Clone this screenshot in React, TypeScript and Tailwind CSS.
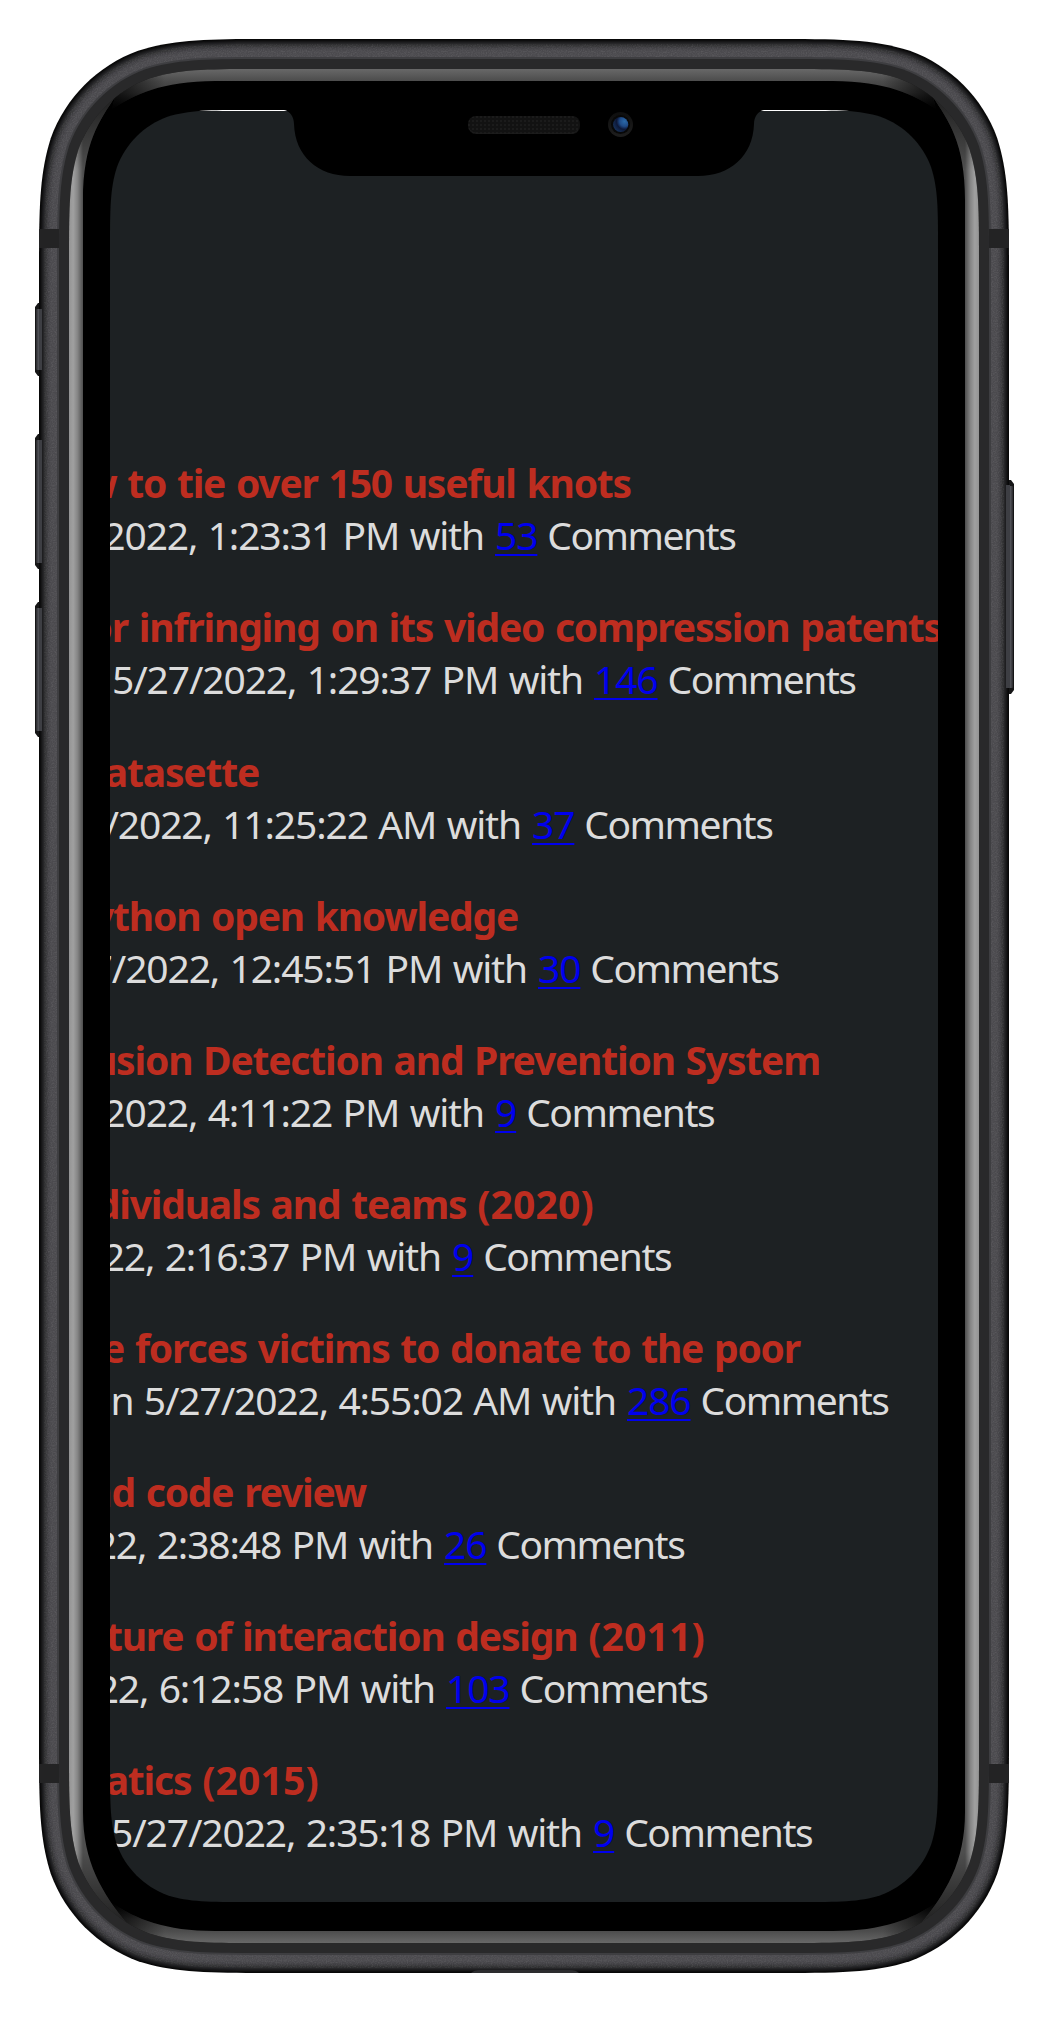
type Story = {
  title: string;
  titleWidth: string;
  posted: string;
  postedWidth: string;
  comments: string;
};

const stories: Story[] = [
  { title: "How to tie over 150 useful knots", titleWidth: "w-[521px]", posted: "5/27/2022, 1:23:31 PM with", postedWidth: "w-[385px]", comments: "53" },
  { title: "for infringing on its video compression patents", titleWidth: "w-[832px]", posted: "on 5/27/2022, 1:29:37 PM with", postedWidth: "w-[484px]", comments: "146" },
  { title: "Datasette", titleWidth: "w-[149px]", posted: "5/27/2022, 11:25:22 AM with", postedWidth: "w-[422px]", comments: "37" },
  { title: "Python open knowledge", titleWidth: "w-[408px]", posted: "5/27/2022, 12:45:51 PM with", postedWidth: "w-[428px]", comments: "30" },
  { title: "Intrusion Detection and Prevention System", titleWidth: "w-[710px]", posted: "5/26/2022, 4:11:22 PM with", postedWidth: "w-[385px]", comments: "9" },
  { title: "individuals and teams (2020)", titleWidth: "w-[484px]", posted: "5/27/2022, 2:16:37 PM with", postedWidth: "w-[342px]", comments: "9" },
  { title: "Ransomware forces victims to donate to the poor", titleWidth: "w-[690px]", posted: "on 5/27/2022, 4:55:02 AM with", postedWidth: "w-[517px]", comments: "286" },
  { title: "and code review", titleWidth: "w-[256px]", posted: "5/27/2022, 2:38:48 PM with", postedWidth: "w-[334px]", comments: "26" },
  { title: "future of interaction design (2011)", titleWidth: "w-[595px]", posted: "5/26/2022, 6:12:58 PM with", postedWidth: "w-[336px]", comments: "103" },
  { title: "Mathematics (2015)", titleWidth: "w-[209px]", posted: "on 5/27/2022, 2:35:18 PM with", postedWidth: "w-[483px]", comments: "9" },
];

/** Rounded rectangle with continuous-curvature corners. */
function squircle(x0: number, y0: number, x1: number, y1: number, r: number) {
  const a = 1.528665 * r, b = 1.088493 * r, c = 0.868407 * r, d = 0.631494 * r;
  const e = 0.074911 * r, f = 0.372824 * r, g = 0.16906 * r;
  return [
    `M${x0 + a},${y0}H${x1 - a}`,
    `C${x1 - b},${y0} ${x1 - c},${y0} ${x1 - d},${y0 + e}`,
    `C${x1 - f},${y0 + g} ${x1 - g},${y0 + f} ${x1 - e},${y0 + d}`,
    `C${x1},${y0 + c} ${x1},${y0 + b} ${x1},${y0 + a}V${y1 - a}`,
    `C${x1},${y1 - b} ${x1},${y1 - c} ${x1 - e},${y1 - d}`,
    `C${x1 - g},${y1 - f} ${x1 - f},${y1 - g} ${x1 - d},${y1 - e}`,
    `C${x1 - c},${y1} ${x1 - b},${y1} ${x1 - a},${y1}H${x0 + a}`,
    `C${x0 + b},${y1} ${x0 + c},${y1} ${x0 + d},${y1 - e}`,
    `C${x0 + f},${y1 - g} ${x0 + g},${y1 - f} ${x0 + e},${y1 - d}`,
    `C${x0},${y1 - c} ${x0},${y1 - b} ${x0},${y1 - a}V${y0 + a}`,
    `C${x0},${y0 + b} ${x0},${y0 + c} ${x0 + e},${y0 + d}`,
    `C${x0 + g},${y0 + f} ${x0 + f},${y0 + g} ${x0 + d},${y0 + e}`,
    `C${x0 + c},${y0} ${x0 + b},${y0} ${x0 + a},${y0}Z`,
  ].join("");
}

const body = (inset: number) =>
  squircle(39 + inset, 39 + inset, 1009 - inset, 1973 - inset, 157 - inset);
const screenHole = squircle(110, 110, 938, 1902, 91);

const bandShades = [
  "#080808", "#0d0d0e", "#161617", "#1e1e20", "#262628", "#2d2d2f", "#333335",
  "#39393b", "#3e3d41", "#434246", "#464549", "#49484c", "#4b4a4e",
];

const sideShape = "M60,1006V150L110,97H115C100,120 83,142 83,200V1812C83,1862 102,1893 128,1925L110,1930L60,1900Z";
const topShape = "M112,109C134,95 162,81 215,81H525V60H150L115,97Z";
const bottomShape = "M112,1903C136,1919 165,1931 215,1931H525V1950H160L126,1924Z";

function Rims() {
  return (
    <>
      <path d={topShape} fill="url(#top)" />
      <path d={topShape} fill="url(#endFade)" />
      <path d={bottomShape} fill="url(#bottom)" />
      <path d={bottomShape} fill="url(#endFade)" />
      <path d={sideShape} fill="url(#side)" />
      <path d={sideShape} fill="url(#sideFade)" />
    </>
  );
}

function SideButton({ x, y, h }: { x: number; y: number; h: number }) {
  return (
    <g>
      <path d={`M${x + 8},${y - 1}H${x + 3}L${x},${y + 3}V${y + h - 3}L${x + 3},${y + h + 1}H${x + 8}Z`} fill="#151516" />
      <rect x={x + 1} y={y + 5} width="7" height={h - 10} rx="1" fill="url(#button)" />
    </g>
  );
}

function PhoneFrame() {
  return (
    <svg className="pointer-events-none absolute inset-0" width="1048" height="2025" viewBox="0 0 1048 2025" aria-hidden="true">
      <defs>
        <linearGradient id="side" gradientUnits="userSpaceOnUse" x1="69" y1="0" x2="83" y2="0">
          <stop offset="0" stopColor="#949494" />
          <stop offset=".3" stopColor="#a0a0a0" />
          <stop offset=".6" stopColor="#868686" />
          <stop offset="1" stopColor="#4e4e4e" />
        </linearGradient>
        <linearGradient id="sideFade" gradientUnits="userSpaceOnUse" x1="0" y1="97" x2="0" y2="1925">
          <stop offset="0" stopColor="#000" stopOpacity=".6" />
          <stop offset=".04" stopColor="#000" stopOpacity="0" />
          <stop offset=".96" stopColor="#000" stopOpacity="0" />
          <stop offset="1" stopColor="#000" stopOpacity=".6" />
        </linearGradient>
        <linearGradient id="endFade" gradientUnits="userSpaceOnUse" x1="108" y1="0" x2="165" y2="0">
          <stop offset="0" stopColor="#000" stopOpacity=".8" />
          <stop offset="1" stopColor="#000" stopOpacity="0" />
        </linearGradient>
        <linearGradient id="top" gradientUnits="userSpaceOnUse" x1="0" y1="69" x2="0" y2="109">
          <stop offset="0" stopColor="#686868" />
          <stop offset=".3" stopColor="#4c4c4c" />
          <stop offset=".6" stopColor="#393939" />
          <stop offset="1" stopColor="#000" />
        </linearGradient>
        <linearGradient id="bottom" gradientUnits="userSpaceOnUse" x1="0" y1="1943" x2="0" y2="1903">
          <stop offset="0" stopColor="#686868" />
          <stop offset=".3" stopColor="#4c4c4c" />
          <stop offset=".6" stopColor="#393939" />
          <stop offset="1" stopColor="#000" />
        </linearGradient>
        <linearGradient id="button">
          <stop offset="0" stopColor="#29292c" />
          <stop offset=".35" stopColor="#505157" />
          <stop offset=".7" stopColor="#505157" />
          <stop offset="1" stopColor="#242427" />
        </linearGradient>
        <radialGradient id="lens" cx=".75" cy=".3" r=".8">
          <stop offset="0" stopColor="#2a69a8" />
          <stop offset=".4" stopColor="#1f4a86" />
          <stop offset=".65" stopColor="#0d1838" />
          <stop offset="1" stopColor="#163058" />
        </radialGradient>
        <linearGradient id="cameraRing" x1="0" y1="0" x2="0" y2="1">
          <stop offset="0" stopColor="#0e0e0e" />
          <stop offset="1" stopColor="#1e1e1e" />
        </linearGradient>
        <pattern id="mesh" width="4" height="4" patternUnits="userSpaceOnUse">
          <rect width="4" height="4" fill="#121212" />
          <rect width="2" height="2" fill="#1b1b1b" />
        </pattern>
        <filter id="grain" x="0" y="0" width="100%" height="100%">
          <feTurbulence type="fractalNoise" baseFrequency=".8" numOctaves="2" />
          <feColorMatrix values="0 0 0 0 1  0 0 0 0 1  0 0 0 0 1  .35 0 0 0 -.13" />
          <feComposite in2="SourceGraphic" operator="in" />
        </filter>
        <clipPath id="rimClip"><path d={body(30)} /></clipPath>
        <mask id="cutout" maskUnits="userSpaceOnUse" x="0" y="0" width="1048" height="2025">
          <rect width="1048" height="2025" fill="#fff" />
          <path d={screenHole} fill="#000" />
        </mask>
      </defs>

      <SideButton x={35} y={304} h={71} />
      <SideButton x={35} y={435} h={133} />
      <SideButton x={35} y={603} h={133} />
      <g transform="matrix(-1 0 0 1 1049 0)">
        <SideButton x={35} y={481} h={212} />
      </g>

      <g mask="url(#cutout)">
        {bandShades.map((shade, i) => (
          <path key={shade} d={body(i)} fill={shade} />
        ))}
        <path d={body(5)} fill="#fff" filter="url(#grain)" opacity=".5" />
        <path d={body(18)} fill="#3e3e41" />
        <path d={body(20)} fill="#29292a" />
        <path d={body(30)} fill="#000" />
        <path d="M39,229H59V248H39ZM989,229H1009V248H989ZM39,1764H59V1783H39ZM989,1764H1009V1783H989Z" fill="#232324" />
        <g clipPath="url(#rimClip)">
          <Rims />
          <g transform="matrix(-1 0 0 1 1048 0)">
            <Rims />
          </g>
        </g>
        <path d="M471,1973Q474,1970 480,1970H570Q576,1970 579,1973Z" fill="#2c2c2e" />
      </g>

      {/* Inner edges of the buttons, where they overlap the band */}
      <path d="M39,309h3v61h-3ZM39,440h3v123h-3ZM39,608h3v123h-3ZM1006,485h4v203h-4Z" fill="#3d3e43" />

      {/* Notch with speaker and camera */}
      <path d="M284,105V110C290,111 294,117 294,124C295,156 318,176 350,176H698C730,176 753,156 754,124C754,117 758,111 764,110V105Z" fill="#000" />
      <rect x="468" y="116" width="112" height="18" rx="8" fill="url(#mesh)" />
      <path d="M470,130Q473,133.300 477,133.300H571Q575,133.300 578,130" fill="none" stroke="#1d1d1d" />
      <circle cx="620.500" cy="124.500" r="12.500" fill="url(#cameraRing)" />
      <circle cx="620.500" cy="124.500" r="9.500" fill="#080808" />
      <circle cx="620.700" cy="124.500" r="7.600" fill="url(#lens)" />
    </svg>
  );
}

/** Parenthesised years are set a little looser than words. */
function Title({ text }: { text: string }) {
  return text.split(/(\(\d+\))/).map((part, i) =>
    i % 2 === 1 ? <span key={i} className="tracking-[0.2px]">{part}</span> : part,
  );
}

function StoryRow({ story }: { story: Story }) {
  return (
    <li className="text-[39px] leading-[52px] whitespace-nowrap">
      <h2 className={`flex justify-end font-bold tracking-[-1.19px] text-[#bd2d20] ${story.titleWidth}`}>
        <span className="[word-spacing:1.8px]"><Title text={story.title} /></span>
      </h2>
      <p className="flex tracking-[-1.14px] text-[#dcdcdc]">
        <span className={`flex shrink-0 justify-end pr-[11px] [word-spacing:1.4px] ${story.postedWidth}`}>{story.posted}</span>
        <a className="text-[#0000ee] underline decoration-2 underline-offset-4 [text-decoration-skip-ink:none]" href="#comments">{story.comments}</a>
        <span className="pl-[10px] tracking-[-1.5px]">Comments</span>
      </p>
    </li>
  );
}

export default function App() {
  return (
    <main className="relative h-[2025px] w-[1048px] overflow-hidden bg-white pt-[110px] pl-[110px] font-['Noto_Sans','Open_Sans',sans-serif]">
      <section className="h-[1792px] w-[828px] overflow-hidden bg-white pt-px">
        <ul className="flex h-full flex-col gap-[40.08px] bg-[#1d2123] pt-[346.4px]">
          {stories.map((story) => (
            <StoryRow key={story.title} story={story} />
          ))}
        </ul>
      </section>
      <PhoneFrame />
    </main>
  );
}
